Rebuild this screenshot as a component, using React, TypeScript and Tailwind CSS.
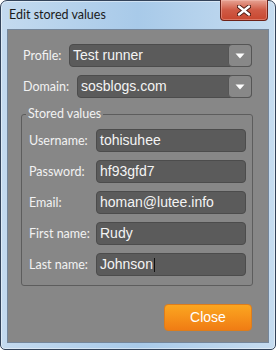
import React from "react";

const labelFont = "font-['Lato',sans-serif] text-[12.5px] leading-[16px] text-[#f2f2f2]";
const valueFont = "font-['Liberation_Sans',Arial,sans-serif] text-[14px] text-[#f4f4f4]";

const storedValues = [
  { label: "Username:", value: "tohisuhee" },
  { label: "Password:", value: "hf93gfd7" },
  { label: "Email:", value: "homan@lutee.info" },
  { label: "First name:", value: "Rudy" },
  { label: "Last name:", value: "Johnson", focused: true },
];

function Select({ value }: { value: string }) {
  return (
    <div className="flex h-[23px] flex-1 items-center rounded-[4px] border border-[#4c4c4c] bg-[#5b5b5b]">
      <span className={`flex-1 pl-[3px] ${valueFont}`}>{value}</span>
      <div className="-mr-px flex h-[23px] w-[24px] items-center justify-center rounded-[4px] border border-[#555] bg-[#888]">
        <svg width="10" height="6" viewBox="0 0 10 6">
          <path d="M0.5 0.5 L9.5 0.5 L5 5.5 Z" fill="#fff" />
        </svg>
      </div>
    </div>
  );
}

function Field({ value, focused }: { value: string; focused?: boolean }) {
  return (
    <div className="flex h-[23px] items-center rounded-[4px] border border-[#4c4c4c] bg-[#5b5b5b] pl-[3px]">
      <span className={valueFont}>{value}</span>
      {focused ? <span className="ml-px h-[14px] w-px bg-[#111]" /> : null}
    </div>
  );
}

export default function App() {
  return (
    <div className="h-[351px] w-[276px] bg-white">
      <div className="flex h-[350px] w-[276px] flex-col rounded-t-[7px] rounded-b-[5px] border border-[#33435a] bg-linear-to-r from-[#c4daef] via-[#a8cae9] to-[#c6dcf0] px-[6px] pb-[6px] shadow-[inset_0_0_0_1px_rgba(255,255,255,0.45)]">
        <div className="flex h-[28px] items-start justify-between">
          <span className="pl-[2px] pt-[6px] font-['Lato',sans-serif] text-[12.5px] leading-[16px] text-[#1b1b1b]">
            Edit stored values
          </span>
          <div className="-mt-px mr-px flex h-[21px] w-[48px] items-center justify-center rounded-b-[4px] border border-t-0 border-[#6e2218] bg-linear-to-b from-[#e6a394] via-[#cf5a45] to-[#c8472f] shadow-[inset_0_0_0_1px_rgba(255,210,200,0.35)]">
            <svg width="14" height="11" viewBox="0 0 14 11">
              <path d="M2 1.5 L12 9.5 M12 1.5 L2 9.5" stroke="#4a1810" strokeWidth="4.2" strokeLinecap="round" />
              <path d="M2 1.5 L12 9.5 M12 1.5 L2 9.5" stroke="#fff" strokeWidth="2.4" strokeLinecap="round" />
            </svg>
          </div>
        </div>

        <div className="flex flex-1 flex-col border border-[#75869a] bg-[#878787] pl-[15px] pr-[16px] pt-[14px]">
          <div className="flex h-[23px] items-center">
            <span className={`w-[46px] shrink-0 whitespace-nowrap ${labelFont}`}>Profile:</span>
            <Select value="Test runner" />
          </div>
          <div className="mt-[8px] flex h-[23px] items-center">
            <span className={`w-[54px] shrink-0 whitespace-nowrap ${labelFont}`}>Domain:</span>
            <Select value="sosblogs.com" />
          </div>

          <fieldset className="-ml-[2px] -mr-px mt-[8px] rounded-[3px] border border-[#5d5d5d] pb-[9px] pl-[7px] pr-[6px] pt-[7px]">
            <legend className={`-ml-[3px] px-[2px] ${labelFont}`}>Stored values</legend>
            <div className="flex flex-col gap-[8px]">
              {storedValues.map((row) => (
                <div key={row.label} className="grid grid-cols-[67px_1fr] items-center">
                  <span className={`whitespace-nowrap ${labelFont}`}>{row.label}</span>
                  <Field value={row.value} focused={row.focused} />
                </div>
              ))}
            </div>
          </fieldset>

          <div className="mt-[18px] flex justify-end">
            <button
              type="button"
              className="h-[27px] w-[88px] rounded-[4px] border border-[#dd7d1c] bg-linear-to-b from-[#fba620] to-[#f07c14] font-['Liberation_Sans',Arial,sans-serif] text-[14px] text-white"
            >
              Close
            </button>
          </div>
        </div>
      </div>
    </div>
  );
}
